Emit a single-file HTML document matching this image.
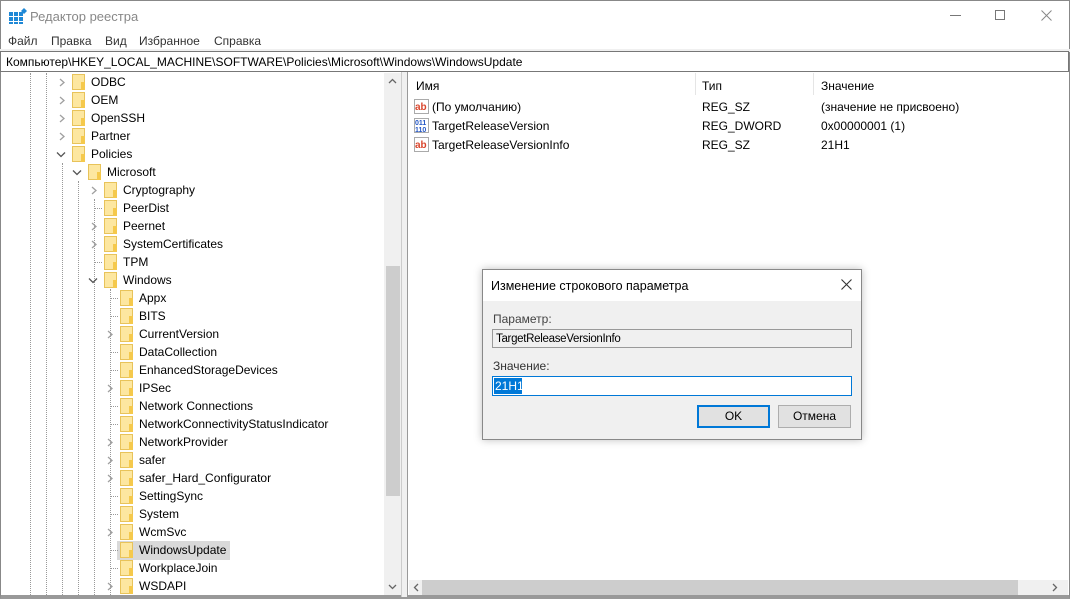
<!DOCTYPE html>
<html><head><meta charset="utf-8"><style>
*{margin:0;padding:0;box-sizing:border-box}
body{width:1070px;height:599px;overflow:hidden;background:#fff;font-family:"Liberation Sans",sans-serif;font-size:12px;color:#000;position:relative}
.a{position:absolute;white-space:nowrap}
.fold{position:absolute;width:13px;height:16px;background:#fde7a0;border:1px solid #e8c35a}
.fold:after{content:"";position:absolute;right:-1px;bottom:-1px;width:4px;height:8px;background:#f5c94c}
.vd{position:absolute;width:1px;border-left:1px dotted #999}
.hd{position:absolute;height:1px;width:8px;border-top:1px dotted #999}
</style></head><body>
<div class="a" style="left:0;top:0;width:1070px;height:599px;border:1px solid #888;border-bottom:4px solid #999"></div>
<svg class="a" style="left:9px;top:8px" width="18" height="16"><g fill="#1e88d6"><rect x="0" y="4" width="4" height="4"/><rect x="5" y="4" width="4" height="4"/><rect x="0" y="9" width="4" height="4"/><rect x="5" y="9" width="4" height="4"/><rect x="10" y="9" width="4" height="4"/><rect x="10" y="4" width="4" height="4"/><rect x="0" y="14" width="4" height="2"/><rect x="5" y="14" width="4" height="2"/><rect x="10" y="14" width="4" height="2"/></g><path d="M15 0l3 3-3 3-3-3z" fill="#1e88d6"/></svg>
<div class="a" style="left:30px;top:9px;font-size:13px;color:#888">Редактор реестра</div>
<div class="a" style="left:950px;top:15px;width:11px;height:1px;background:#777"></div>
<div class="a" style="left:995px;top:10px;width:10px;height:10px;border:1px solid #777"></div>
<svg class="a" style="left:1041px;top:10px" width="11" height="11"><path d="M0.5 0.5l10 10M10.5 0.5l-10 10" stroke="#888" stroke-width="1"/></svg>
<div class="a" style="left:8px;top:34px;color:#333">Файл</div>
<div class="a" style="left:51px;top:34px;color:#333">Правка</div>
<div class="a" style="left:105px;top:34px;color:#333">Вид</div>
<div class="a" style="left:139px;top:34px;color:#333">Избранное</div>
<div class="a" style="left:214px;top:34px;color:#333">Справка</div>
<div class="a" style="left:0;top:49px;width:1070px;height:3px;background:#f0f0f0"></div>
<div class="a" style="left:0;top:51px;width:1069px;height:21px;border:1px solid #777;background:#fff"></div>
<div class="a" style="left:6px;top:55px">Компьютер\HKEY_LOCAL_MACHINE\SOFTWARE\Policies\Microsoft\Windows\WindowsUpdate</div>
<div class="a" style="left:401px;top:72px;width:7px;height:525px;background:#f0f0f0;border-left:1px solid #ccc;border-right:1px solid #999"></div>
<div class="a" style="left:384px;top:73px;width:17px;height:522px;background:#f0f0f0"></div>
<svg class="a" style="left:388px;top:78px" width="9" height="6"><path d="M1 5l3.5-3.5L8 5" fill="none" stroke="#666" stroke-width="1.3"/></svg>
<div class="a" style="left:386px;top:266px;width:14px;height:230px;background:#cdcdcd"></div>
<svg class="a" style="left:388px;top:584px" width="9" height="6"><path d="M1 1l3.5 3.5L8 1" fill="none" stroke="#666" stroke-width="1.3"/></svg>
<div class="vd" style="left:30px;top:73px;height:522px"></div>
<div class="vd" style="left:46px;top:73px;height:522px"></div>
<div class="vd" style="left:62px;top:163px;height:432px"></div>
<div class="vd" style="left:78px;top:181px;height:414px"></div>
<div class="vd" style="left:94px;top:199px;height:396px"></div>
<div class="vd" style="left:110px;top:289px;height:306px"></div>
<div class="a" style="left:409px;top:73px;width:659px;height:522px;background:#fff"></div>
<div class="a" style="left:695px;top:73px;width:1px;height:22px;background:#e5e5e5"></div>
<div class="a" style="left:813px;top:73px;width:1px;height:22px;background:#e5e5e5"></div>
<div class="a" style="left:416px;top:79px">Имя</div>
<div class="a" style="left:702px;top:79px">Тип</div>
<div class="a" style="left:821px;top:79px">Значение</div>
<svg class="a" style="left:414px;top:99px" width="16" height="16"><rect x="0.5" y="0.5" width="14" height="14" fill="#fff" stroke="#aaa"/><text x="1" y="11" font-size="10" font-weight="bold" fill="#d9442b" font-family="Liberation Sans">ab</text></svg>
<svg class="a" style="left:414px;top:118px" width="16" height="16"><rect x="0.5" y="0.5" width="14" height="14" fill="#fff" stroke="#aaa"/><text x="1" y="7" font-size="7" font-weight="bold" fill="#2457c5" font-family="Liberation Sans">011</text><text x="1" y="14" font-size="7" font-weight="bold" fill="#2457c5" font-family="Liberation Sans">110</text></svg>
<svg class="a" style="left:414px;top:137px" width="16" height="16"><rect x="0.5" y="0.5" width="14" height="14" fill="#fff" stroke="#aaa"/><text x="1" y="11" font-size="10" font-weight="bold" fill="#d9442b" font-family="Liberation Sans">ab</text></svg>
<div class="a" style="left:432px;top:100px">(По умолчанию)</div>
<div class="a" style="left:432px;top:119px">TargetReleaseVersion</div>
<div class="a" style="left:432px;top:138px">TargetReleaseVersionInfo</div>
<div class="a" style="left:702px;top:100px">REG_SZ</div>
<div class="a" style="left:702px;top:119px">REG_DWORD</div>
<div class="a" style="left:702px;top:138px">REG_SZ</div>
<div class="a" style="left:821px;top:100px">(значение не присвоено)</div>
<div class="a" style="left:821px;top:119px">0x00000001 (1)</div>
<div class="a" style="left:821px;top:138px">21H1</div>
<div class="a" style="left:409px;top:580px;width:659px;height:15px;background:#f0f0f0"></div>
<svg class="a" style="left:413px;top:583px" width="6" height="9"><path d="M5 1L1.5 4.5 5 8" fill="none" stroke="#666" stroke-width="1.3"/></svg>
<div class="a" style="left:422px;top:580px;width:596px;height:15px;background:#cdcdcd"></div>
<svg class="a" style="left:1052px;top:583px" width="6" height="9"><path d="M1 1l3.5 3.5L1 8" fill="none" stroke="#666" stroke-width="1.3"/></svg>
<div class="a" style="left:117px;top:541px;width:113px;height:19px;background:#d9d9d9"></div>
<div id="tree"></div>
<script>
var rows=[["ODBC",1,">"],["OEM",1,">"],["OpenSSH",1,">"],["Partner",1,">"],["Policies",1,"v"],["Microsoft",2,"v"],["Cryptography",3,">"],["PeerDist",3,"."],["Peernet",3,">"],["SystemCertificates",3,">"],["TPM",3,"."],["Windows",3,"v"],["Appx",4,"."],["BITS",4,"."],["CurrentVersion",4,">"],["DataCollection",4,"."],["EnhancedStorageDevices",4,"."],["IPSec",4,">"],["Network Connections",4,"."],["NetworkConnectivityStatusIndicator",4,"."],["NetworkProvider",4,">"],["safer",4,">"],["safer_Hard_Configurator",4,">"],["SettingSync",4,"."],["System",4,"."],["WcmSvc",4,">"],["WindowsUpdate",4,"."],["WorkplaceJoin",4,"."],["WSDAPI",4,">"]];
var h="";
rows.forEach(function(r,i){var y=73+i*18,fx=56+r[1]*16;
if(r[2]==".")h+='<div class="hd" style="left:'+(fx-10)+'px;top:'+(y+9)+'px"></div>';
else if(r[2]==">")h+='<svg class="a" style="left:'+(fx-14)+'px;top:'+(y+5)+'px" width="8" height="9"><path d="M2 1l4 3.5-4 3.5" fill="none" stroke="#a0a0a0" stroke-width="1.3"/></svg>';
else h+='<svg class="a" style="left:'+(fx-16)+'px;top:'+(y+6)+'px" width="10" height="7"><path d="M1 1.5l4 4 4-4" fill="none" stroke="#555" stroke-width="1.3"/></svg>';
h+='<div class="fold" style="left:'+fx+'px;top:'+(y+1)+'px"></div>';
h+='<div class="a" style="left:'+(fx+19)+'px;top:'+(y+2)+'px;z-index:2">'+r[0]+'</div>';});
document.getElementById("tree").innerHTML=h;
</script>
<div class="a" style="left:482px;top:269px;width:380px;height:171px;background:#f0f0f0;border:1px solid #888;box-shadow:0 0 8px rgba(0,0,0,.25)"></div>
<div class="a" style="left:483px;top:270px;width:378px;height:31px;background:#fff"></div>
<div class="a" style="left:491px;top:279px;font-size:12.5px">Изменение строкового параметра</div>
<svg class="a" style="left:841px;top:279px" width="11" height="11"><path d="M0.5 0.5l10 10M10.5 0.5l-10 10" stroke="#333" stroke-width="1.1"/></svg>
<div class="a" style="left:493px;top:312px;color:#444">Параметр:</div>
<div class="a" style="left:492px;top:329px;width:360px;height:19px;border:1px solid #999;background:#f0f0f0"></div>
<div class="a" style="left:496px;top:333px;font-size:11.5px;letter-spacing:-0.3px">TargetReleaseVersionInfo</div>
<div class="a" style="left:493px;top:359px;color:#333">Значение:</div>
<div class="a" style="left:492px;top:376px;width:360px;height:20px;border:1px solid #0078d7;background:#fff"></div>
<div class="a" style="left:494px;top:378px;width:28px;height:16px;background:#0078d7"></div>
<div class="a" style="left:495px;top:379px;color:#fff">21H1</div>
<div class="a" style="left:697px;top:405px;width:73px;height:23px;border:2px solid #0078d7;background:#e1e1e1;text-align:center;line-height:19px">OK</div>
<div class="a" style="left:778px;top:405px;width:73px;height:23px;border:1px solid #adadad;background:#e1e1e1;text-align:center;line-height:21px">Отмена</div>
</body></html>
